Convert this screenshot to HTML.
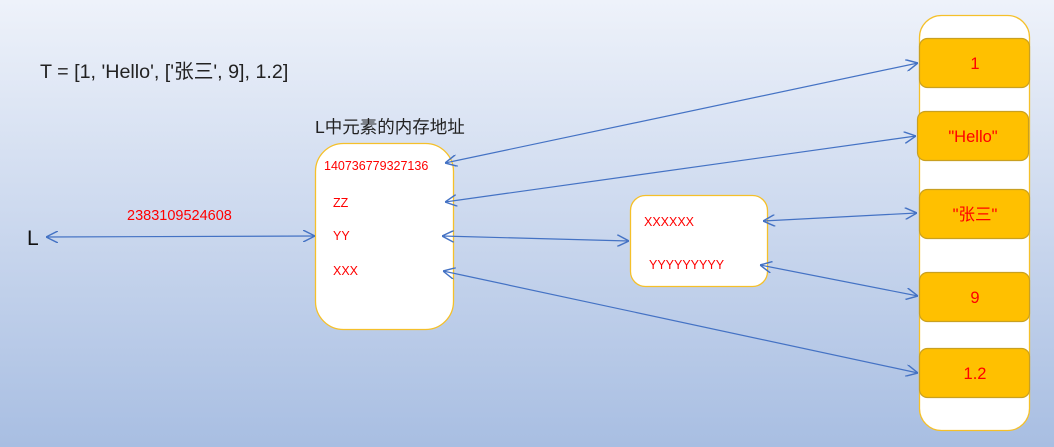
<!DOCTYPE html>
<html><head><meta charset="utf-8"><style>
html,body{margin:0;padding:0;width:1054px;height:447px;overflow:hidden}
svg{display:block}
text{font-family:"Liberation Sans","Noto Sans CJK SC",sans-serif}
</style></head><body>
<svg width="1054" height="447" viewBox="0 0 1054 447">
<defs>
<linearGradient id="bg" x1="0" y1="0" x2="0" y2="1">
<stop offset="0" stop-color="#eef2fa"/><stop offset="1" stop-color="#a8bee2"/>
</linearGradient>
<marker id="a" viewBox="0 0 10 10" refX="10" refY="5" markerWidth="12" markerHeight="12" markerUnits="userSpaceOnUse" orient="auto-start-reverse">
<path d="M0,0 L10,5 L0,10" fill="none" stroke="#4472c4" stroke-width="1.2"/>
</marker>
</defs>
<rect width="1054" height="447" fill="url(#bg)"/>
<text x="40" y="78" font-size="19.7" fill="#222">T = [1, 'Hello', ['张三', 9], 1.2]</text>
<text x="315" y="133" font-size="17.5" fill="#222">L中元素的内存地址</text>
<text x="27" y="245" font-size="21" fill="#111">L</text>
<text x="127" y="220" font-size="14.5" fill="#f00">2383109524608</text>

<rect x="315.5" y="143.5" width="138" height="186" rx="28" fill="#fff" stroke="#f5c02a" stroke-width="1.3"/>
<text x="324" y="170" font-size="12.5" fill="#f00">140736779327136</text>
<text x="333" y="207" font-size="12.5" fill="#f00">ZZ</text>
<text x="333" y="240" font-size="12.5" fill="#f00">YY</text>
<text x="333" y="275" font-size="12.5" fill="#f00">XXX</text>

<rect x="630.5" y="195.5" width="137" height="91" rx="15" fill="#fff" stroke="#f5c02a" stroke-width="1.3"/>
<text x="644" y="226" font-size="12.5" fill="#f00">XXXXXX</text>
<text x="649" y="269" font-size="12.5" fill="#f00">YYYYYYYYY</text>

<rect x="919.5" y="15.5" width="110" height="415" rx="22" fill="#fff" stroke="#f5c02a" stroke-width="1.3"/>
<g stroke="#c9a020" stroke-width="1.2" fill="#ffc000">
<rect x="919.5" y="38.5" width="110" height="49" rx="8"/>
<rect x="917.5" y="111.5" width="111" height="49" rx="8"/>
<rect x="919.5" y="189.5" width="110" height="49" rx="8"/>
<rect x="919.5" y="272.5" width="110" height="49" rx="8"/>
<rect x="919.5" y="348.5" width="110" height="49" rx="8"/>
</g>
<g font-size="16.5" fill="#f00" text-anchor="middle">
<text x="975" y="69">1</text>
<text x="973" y="142">"Hello"</text>
<text x="975" y="220">"张三"</text>
<text x="975" y="303">9</text>
<text x="975" y="379">1.2</text>
</g>

<g stroke="#4472c4" stroke-width="1.2" fill="none" marker-start="url(#a)" marker-end="url(#a)">
<line x1="46" y1="237" x2="315" y2="236"/>
<line x1="445" y1="163" x2="918" y2="63"/>
<line x1="445" y1="202" x2="916" y2="136"/>
<line x1="442" y1="236" x2="629" y2="241"/>
<line x1="763" y1="221" x2="917" y2="213"/>
<line x1="760" y1="265" x2="918" y2="296"/>
<line x1="443" y1="271" x2="918" y2="373"/>
</g>
</svg>
</body></html>
